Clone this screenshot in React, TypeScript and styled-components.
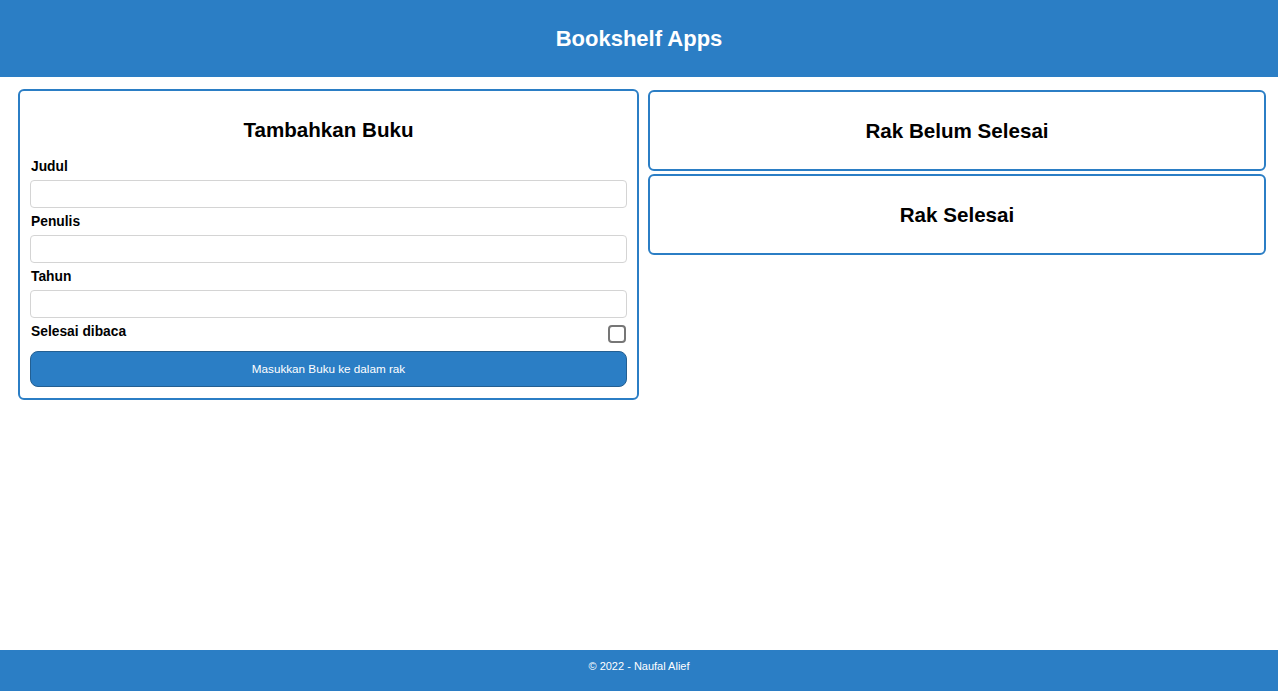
import React from "react";
import styled, { createGlobalStyle } from "styled-components";

const BLUE = "#2b7ec5";

const GlobalStyle = createGlobalStyle`
  * { box-sizing: border-box; }
  html, body { margin: 0; padding: 0; background: #fff; }
  body { font-family: "Liberation Sans", Arial, sans-serif; color: #000; }
`;

const Page = styled.div`
  width: 1278px;
  min-height: 691px;
  display: flex;
  flex-direction: column;
`;

const Header = styled.header`
  height: 77px;
  background: ${BLUE};
  display: flex;
  align-items: center;
  justify-content: center;
`;

const AppTitle = styled.h1`
  margin: 0;
  color: #fff;
  font-size: 22px;
  font-weight: 700;
  line-height: 26px;
`;

const Main = styled.main`
  display: grid;
  grid-template-columns: 621fr 618fr;
  column-gap: 9px;
  align-items: start;
  padding: 12px 12px 0 18px;
`;

const Card = styled.section`
  border: 2px solid ${BLUE};
  border-radius: 6px;
  background: #fff;
`;

const FormCard = styled(Card)`
  padding: 0 10px 11px;
`;

const FormTitle = styled.h2`
  margin: 27px 0 17px;
  text-align: center;
  font-size: 20.6px;
  font-weight: 700;
  line-height: 23px;
`;

const Label = styled.label`
  display: block;
  font-size: 13.8px;
  font-weight: 700;
  line-height: 16px;
  padding: 1px 0 0 1px;
`;

const Field = styled.div`
  display: flex;
  flex-direction: column;
  & + & { margin-top: 5px; }
`;

const Input = styled.input`
  margin-top: 5px;
  height: 28px;
  width: 100%;
  border: 1px solid #d4d4d4;
  border-radius: 4px;
  background: #fff;
  padding: 0 8px;
  font: inherit;
  outline: none;
`;

const CheckRow = styled.div`
  margin-top: 5px;
  height: 22px;
  display: flex;
  justify-content: space-between;
  align-items: flex-start;
`;

const CheckBox = styled.input`
  appearance: none;
  margin: 2px 1px 0 0;
  width: 18px;
  height: 18px;
  border: 2px solid #767676;
  border-radius: 4px;
  background: #fff;
`;

const SubmitButton = styled.button`
  margin-top: 6px;
  width: 100%;
  height: 36px;
  padding: 0 0 1px;
  background: ${BLUE};
  border: 1px solid #235f92;
  border-radius: 8px;
  color: #fff;
  font-family: "Liberation Sans", Arial, sans-serif;
  font-size: 11.7px;
  cursor: pointer;
`;

const ShelfColumn = styled.div`
  margin-top: 1px;
  display: flex;
  flex-direction: column;
  gap: 3px;
`;

const ShelfCard = styled(Card)`
  padding: 27px 0 26px;
`;

const ShelfTitle = styled.h2`
  margin: 0;
  text-align: center;
  font-size: 20.6px;
  font-weight: 700;
  line-height: 24px;
`;

const Footer = styled.footer`
  margin-top: auto;
  height: 41px;
  padding-top: 9px;
  background: ${BLUE};
  color: #fff;
  font-size: 11px;
  line-height: 14px;
  text-align: center;
`;

export default function App() {
  return (
    <>
      <GlobalStyle />
      <Page>
        <Header>
          <AppTitle>Bookshelf Apps</AppTitle>
        </Header>
        <Main>
          <FormCard>
            <FormTitle>Tambahkan Buku</FormTitle>
            <Field>
              <Label htmlFor="judul">Judul</Label>
              <Input id="judul" type="text" />
            </Field>
            <Field>
              <Label htmlFor="penulis">Penulis</Label>
              <Input id="penulis" type="text" />
            </Field>
            <Field>
              <Label htmlFor="tahun">Tahun</Label>
              <Input id="tahun" type="number" />
            </Field>
            <CheckRow>
              <Label htmlFor="selesai">Selesai dibaca</Label>
              <CheckBox id="selesai" type="checkbox" />
            </CheckRow>
            <SubmitButton type="button">Masukkan Buku ke dalam rak</SubmitButton>
          </FormCard>
          <ShelfColumn>
            <ShelfCard>
              <ShelfTitle>Rak Belum Selesai</ShelfTitle>
            </ShelfCard>
            <ShelfCard>
              <ShelfTitle>Rak Selesai</ShelfTitle>
            </ShelfCard>
          </ShelfColumn>
        </Main>
        <Footer>© 2022 - Naufal Alief</Footer>
      </Page>
    </>
  );
}
